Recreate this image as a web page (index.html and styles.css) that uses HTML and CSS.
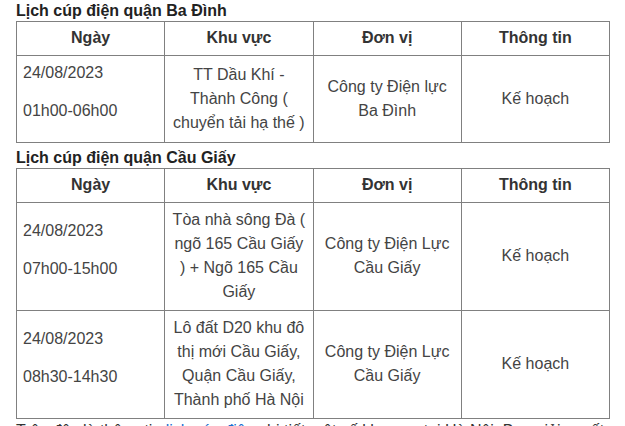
FILE: index.html
```html
<!DOCTYPE html>
<html lang="vi">
<head>
<meta charset="utf-8">
<title>Lịch cúp điện</title>
<link rel="stylesheet" href="styles.css">
</head>
<body>
<div class="article">
  <h3 class="district">Lịch cúp điện quận Ba Đình</h3>
  <table class="schedule">
    <thead>
      <tr><th>Ngày</th><th>Khu vực</th><th>Đơn vị</th><th>Thông tin</th></tr>
    </thead>
    <tbody>
      <tr>
        <td class="date"><p>24/08/2023</p><p>01h00-06h00</p></td>
        <td>TT Dầu Khí - Thành Công ( chuyển tải hạ thế )</td>
        <td>Công ty Điện lực Ba Đình</td>
        <td>Kế hoạch</td>
      </tr>
    </tbody>
  </table>
  <h3 class="district">Lịch cúp điện quận Cầu Giấy</h3>
  <table class="schedule">
    <thead>
      <tr><th>Ngày</th><th>Khu vực</th><th>Đơn vị</th><th>Thông tin</th></tr>
    </thead>
    <tbody>
      <tr>
        <td class="date"><p>24/08/2023</p><p>07h00-15h00</p></td>
        <td>Tòa nhà sông Đà ( ngõ 165 Cầu Giấy ) + Ngõ 165 Cầu Giấy</td>
        <td>Công ty Điện Lực Cầu Giấy</td>
        <td>Kế hoạch</td>
      </tr>
      <tr>
        <td class="date"><p>24/08/2023</p><p>08h30-14h30</p></td>
        <td>Lô đất D20 khu đô thị mới Cầu Giấy, Quận Cầu Giấy, Thành phố Hà Nội</td>
        <td>Công ty Điện Lực Cầu Giấy</td>
        <td>Kế hoạch</td>
      </tr>
    </tbody>
  </table>
  <p class="summary">Trên đây là thông tin <a href="#">lịch cúp điện</a> chi tiết một số khu vực tại Hà Nội. Bạn giải quyết công việc cần thiết trước giờ cắt điện.</p>
</div>
</body>
</html>
```

FILE: styles.css
```css
html, body {
  margin: 0;
  padding: 0;
  background: #ffffff;
}

body {
  font-family: "Liberation Sans", Arial, sans-serif;
  font-size: 16px;
  line-height: 24px;
  color: #444444;
}

.article {
  padding: 0 16px;
}

.district {
  margin: 0;
  font-size: 16px;
  font-weight: bold;
  line-height: 21px;
  color: #222222;
}

.schedule {
  width: 594px;
  table-layout: fixed;
  border-collapse: collapse;
  margin: 0 0 4px 0;
}

.schedule th,
.schedule td {
  border: 1px solid #808080;
  padding: 5px 6px 6px;
  text-align: center;
  vertical-align: middle;
}

.schedule th {
  font-weight: bold;
  color: #333333;
  padding: 4px 6px 5px;
}

.schedule td {
  color: #444444;
}

.schedule td.date {
  text-align: left;
}

.schedule td.date p {
  margin: 0 0 14px 0;
}

.schedule td.date p:last-child {
  margin-bottom: 13px;
}

.summary {
  margin: -1px 0 0 0;
  line-height: 18px;
  color: #333333;
}

.summary a {
  color: #1a6fd1;
  text-decoration: none;
}
```
